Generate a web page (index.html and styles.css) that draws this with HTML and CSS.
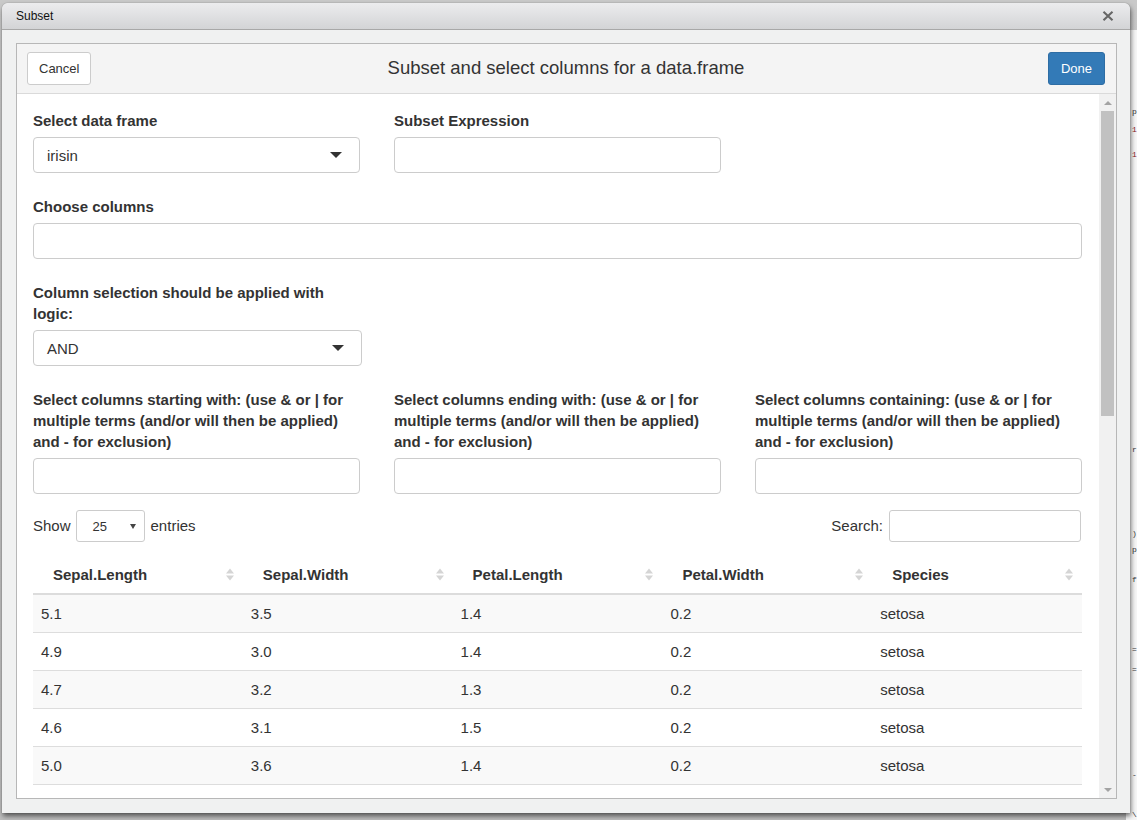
FILE: index.html
```html
<!DOCTYPE html>
<html>
<head>
<meta charset="utf-8">
<title>Subset</title>
<link rel="stylesheet" href="styles.css">
</head>
<body>
<div class="desktop">
  <div class="ide-strip">
    <div class="ide-line l1">p</div>
    <div class="ide-line l2 red">1</div>
    <div class="ide-line l3 red">1</div>
    <div class="ide-line l4">r</div>
    <div class="ide-line l5">)</div>
    <div class="ide-line l6">p</div>
    <div class="ide-line l7">f</div>
    <div class="ide-line l8">=</div>
    <div class="ide-line l9">=</div>
    <div class="ide-line l10">-</div>
    <div class="ide-line l11">\</div>
  </div>
  <div class="window">
    <div class="titlebar">
      <span class="wtitle">Subset</span>
      <svg class="wclose" width="12" height="10" viewBox="0 0 12 10"><path d="M1.5 0.8 L10.5 9.2 M10.5 0.8 L1.5 9.2" stroke="#666" stroke-width="2.1" fill="none"/></svg>
    </div>
    <div class="wbody">
      <div class="gadget">
        <div class="gadget-title">
          <button class="btn btn-default">Cancel</button>
          <h1 class="gtitle">Subset and select columns for a data.frame</h1>
          <button class="btn btn-primary">Done</button>
        </div>
        <div class="gadget-scroll">
          <div class="gadget-content">
            <div class="grid3">
              <div class="form-group">
                <label class="clabel">Select data frame</label>
                <div class="select">irisin<span class="caret"></span></div>
              </div>
              <div class="form-group">
                <label class="clabel">Subset Expression</label>
                <div class="input"></div>
              </div>
            </div>
            <div class="form-group">
              <label class="clabel">Choose columns</label>
              <div class="input"></div>
            </div>
            <div class="grid3">
              <div class="form-group">
                <label class="clabel">Column selection should be applied with logic:</label>
                <div class="select select-wide">AND<span class="caret"></span></div>
              </div>
            </div>
            <div class="grid3 grid-last">
              <div class="form-group">
                <label class="clabel">Select columns starting with: (use &amp; or | for multiple terms (and/or will then be applied) and - for exclusion)</label>
                <div class="input"></div>
              </div>
              <div class="form-group">
                <label class="clabel">Select columns ending with: (use &amp; or | for multiple terms (and/or will then be applied) and - for exclusion)</label>
                <div class="input"></div>
              </div>
              <div class="form-group">
                <label class="clabel">Select columns containing: (use &amp; or | for multiple terms (and/or will then be applied) and - for exclusion)</label>
                <div class="input"></div>
              </div>
            </div>
            <div class="dt-top">
              <div class="dt-length">Show <span class="small-select">25<span class="small-caret"></span></span> entries</div>
              <div class="dt-search">Search: <span class="search-input"></span></div>
            </div>
            <table class="dtable">
              <thead>
                <tr>
                  <th><div class="th-in"><span>Sepal.Length</span><svg class="sort" width="8" height="15" viewBox="0 0 8 15"><path d="M0 6.5 L4 1.5 L8 6.5 Z M0 8.5 L8 8.5 L4 13.5 Z" fill="#d5d5d5"/></svg></div></th>
                  <th><div class="th-in"><span>Sepal.Width</span><svg class="sort" width="8" height="15" viewBox="0 0 8 15"><path d="M0 6.5 L4 1.5 L8 6.5 Z M0 8.5 L8 8.5 L4 13.5 Z" fill="#d5d5d5"/></svg></div></th>
                  <th><div class="th-in"><span>Petal.Length</span><svg class="sort" width="8" height="15" viewBox="0 0 8 15"><path d="M0 6.5 L4 1.5 L8 6.5 Z M0 8.5 L8 8.5 L4 13.5 Z" fill="#d5d5d5"/></svg></div></th>
                  <th><div class="th-in"><span>Petal.Width</span><svg class="sort" width="8" height="15" viewBox="0 0 8 15"><path d="M0 6.5 L4 1.5 L8 6.5 Z M0 8.5 L8 8.5 L4 13.5 Z" fill="#d5d5d5"/></svg></div></th>
                  <th><div class="th-in"><span>Species</span><svg class="sort" width="8" height="15" viewBox="0 0 8 15"><path d="M0 6.5 L4 1.5 L8 6.5 Z M0 8.5 L8 8.5 L4 13.5 Z" fill="#d5d5d5"/></svg></div></th>
                </tr>
              </thead>
              <tbody>
                <tr class="odd"><td>5.1</td><td>3.5</td><td>1.4</td><td>0.2</td><td>setosa</td></tr>
                <tr><td>4.9</td><td>3.0</td><td>1.4</td><td>0.2</td><td>setosa</td></tr>
                <tr class="odd"><td>4.7</td><td>3.2</td><td>1.3</td><td>0.2</td><td>setosa</td></tr>
                <tr><td>4.6</td><td>3.1</td><td>1.5</td><td>0.2</td><td>setosa</td></tr>
                <tr class="odd"><td>5.0</td><td>3.6</td><td>1.4</td><td>0.2</td><td>setosa</td></tr>
              </tbody>
            </table>
          </div>
          <div class="vscroll">
            <div class="sb-btn"><span class="sb-up"></span></div>
            <div class="sb-track"><div class="sb-thumb"></div></div>
            <div class="sb-btn"><span class="sb-down"></span></div>
          </div>
        </div>
      </div>
    </div>
  </div>
</div>
</body>
</html>
```
FILE: styles.css
```css
* { box-sizing: border-box; }
html, body { margin: 0; padding: 0; }
body {
  width: 1137px;
  height: 820px;
  overflow: hidden;
  background: #c6c6c6;
  font-family: "Liberation Sans", Arial, sans-serif;
  color: #333;
}
.desktop {
  position: relative;
  width: 1137px;
  height: 820px;
  background: linear-gradient(#c9c9c9, #bdbdbd);
}

/* background application peeking out on the right */
.ide-strip {
  position: absolute;
  left: 1126px;
  top: 30px;
  width: 11px;
  height: 790px;
  background: #f6f6f6;
  font-family: "Liberation Mono", monospace;
  font-size: 8px;
  line-height: 16px;
  color: #333;
  padding-left: 6px;
}
.ide-line { height: 16px; }
.ide-line.red { color: #8b1a1a; }
.l1 { margin-top: 74px; }
.l2 { margin-top: 2px; }
.l3 { margin-top: 9px; }
.l4 { margin-top: 279px; }
.l5 { margin-top: 68px; }
.l6 { margin-top: 0; }
.l7 { margin-top: 14px; }
.l8 { margin-top: 54px; }
.l9 { margin-top: 4px; }
.l10 { margin-top: 89px; }
.l11 { margin-top: 24px; }

/* the dialog window */
.window {
  position: absolute;
  left: 2px;
  top: 3px;
  width: 1128px;
  height: 810px;
  border-radius: 6px 6px 0 0;
  background: #f0f1f1;
  box-shadow: 1px 3px 5px rgba(0, 0, 0, 0.55), 0 0 1px rgba(0, 0, 0, 0.45);
  display: flex;
  flex-direction: column;
}
.titlebar {
  height: 27px;
  flex: none;
  display: flex;
  align-items: center;
  justify-content: space-between;
  padding: 0 16px 0 14px;
  background: linear-gradient(#ececee, #d3d4d6);
  border-bottom: 1px solid #a8a8a8;
  border-radius: 6px 6px 0 0;
}
.wtitle { font-size: 12px; color: #111; padding-bottom: 1px; }
.wclose { display: block; }

.wbody {
  flex: 1;
  min-height: 0;
  padding: 13px 13px 14px 14px;
  display: flex;
}
.gadget {
  flex: 1;
  min-width: 0;
  border: 1px solid #b7b7b7;
  background: #fff;
  display: flex;
  flex-direction: column;
}
.gadget-title {
  height: 50px;
  flex: none;
  background: #f4f4f4;
  border-bottom: 1px solid #dadada;
  display: grid;
  grid-template-columns: 1fr auto 1fr;
  align-items: center;
  padding: 0 11px 0 10px;
}
.gtitle {
  margin: 0 0 2px 0;
  font-size: 18.5px;
  font-weight: normal;
  color: #333;
  line-height: 24px;
}
.btn {
  height: 33px;
  padding: 0 11px;
  font-family: "Liberation Sans", Arial, sans-serif;
  font-size: 13px;
  border-radius: 3px;
  border: 1px solid #ccc;
  line-height: 31px;
}
.btn-default { background: #fff; color: #333; justify-self: start; }
.btn-primary { background: #337ab7; border-color: #2e6da4; color: #fff; justify-self: end; padding: 0 12px; }

.gadget-scroll {
  flex: 1;
  min-height: 0;
  display: flex;
}
.gadget-content {
  flex: 1;
  min-width: 0;
  overflow: hidden;
  padding: 16px 17px 0 16px;
  font-size: 15px;
  line-height: 21px;
}

/* scrollbar */
.vscroll {
  width: 17px;
  flex: none;
  background: #f1f1f1;
  display: flex;
  flex-direction: column;
}
.sb-btn {
  height: 17px;
  flex: none;
  display: flex;
  align-items: center;
  justify-content: center;
}
.sb-up {
  width: 0; height: 0;
  border-left: 4px solid transparent;
  border-right: 4px solid transparent;
  border-bottom: 4px solid #a3a3a3;
}
.sb-down {
  width: 0; height: 0;
  border-left: 4px solid transparent;
  border-right: 4px solid transparent;
  border-top: 4px solid #a3a3a3;
}
.sb-track { flex: 1; padding: 0 2px; }
.sb-thumb { height: 305px; background: #c1c1c1; }

/* form */
.grid3 {
  display: grid;
  grid-template-columns: 327px 327px 327px;
  column-gap: 34px;
}
.form-group { margin-bottom: 23px; }
.grid-last .form-group { margin-bottom: 16px; }
.clabel {
  display: block;
  font-weight: bold;
  margin-bottom: 6px;
  color: #333;
}
.input, .select {
  height: 36px;
  border: 1px solid #ccc;
  border-radius: 4px;
  background: #fff;
}
.select {
  display: flex;
  align-items: center;
  justify-content: space-between;
  padding: 0 17px 0 13px;
  color: #333;
}
.select-wide { width: 329px; }
.caret {
  width: 0; height: 0;
  border-left: 6px solid transparent;
  border-right: 6px solid transparent;
  border-top: 6px solid #333;
}

/* datatable controls */
.dt-top {
  display: flex;
  justify-content: space-between;
  align-items: center;
  height: 32px;
  margin-bottom: 14px;
}
.dt-length, .dt-search {
  display: flex;
  align-items: center;
  padding-bottom: 2px;
}
.small-select {
  width: 69px;
  height: 32px;
  margin: 2px 6px 0 5px;
  border: 1px solid #ccc;
  border-radius: 3px;
  display: flex;
  align-items: center;
  justify-content: space-between;
  padding: 0 8px 0 16px;
  font-size: 13px;
}
.small-caret {
  width: 0; height: 0;
  border-left: 3px solid transparent;
  border-right: 3px solid transparent;
  border-top: 5px solid #444;
}
.search-input {
  width: 192px;
  height: 32px;
  margin: 2px 1px 0 6px;
  border: 1px solid #ccc;
  border-radius: 3px;
}

/* table */
.dtable {
  width: 1049px;
  table-layout: fixed;
  border-collapse: separate;
  border-spacing: 0;
  font-size: 15px;
  line-height: 21px;
}
.dtable th {
  text-align: left;
  font-weight: bold;
  padding: 8px 9px 8px 20px;
  border-bottom: 2px solid #dcdcdc;
}
.th-in {
  display: flex;
  justify-content: space-between;
  align-items: center;
}
.sort { display: block; }
.dtable td {
  padding: 8px;
  border-bottom: 1px solid #ddd;
  color: #333;
}
.dtable tr.odd td { background: #f9f9f9; }
```
